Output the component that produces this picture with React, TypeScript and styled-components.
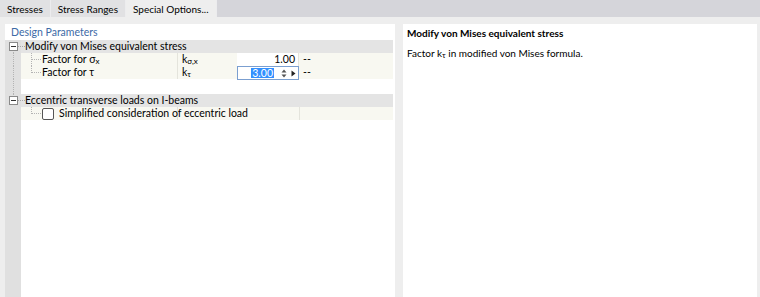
import styled, { createGlobalStyle } from 'styled-components';

const GlobalStyle = createGlobalStyle`
    html, body {
        margin: 0;
        padding: 0;
        background: #eeeeee;
    }
    body {
        font-family: Lato, 'Noto Sans', sans-serif;
        font-size: 10.5px;
        color: #000;
    }
`;

const tabs = ['Stresses', 'Stress Ranges', 'Special Options...'];

const Sub = ({ children }: { children: string }) => <SubText>{children}</SubText>;

export default function App() {
    return (
        <Frame>
            <GlobalStyle />
            <TabBar>
                {tabs.map((t, i) => (
                    <Tab key={t} $active={i === tabs.length - 1}>
                        {t}
                    </Tab>
                ))}
            </TabBar>
            <Content>
                <LeftPanel>
                    <PanelHeader>Design Parameters</PanelHeader>
                    <Tree>
                        <GroupRow>
                            <Gutter>
                                <MinusBox />
                                <RootLine $down />
                            </Gutter>
                            <GroupText>Modify von Mises equivalent stress</GroupText>
                        </GroupRow>
                        <ItemRow>
                            <Gutter>
                                <RootLine $up $down />
                            </Gutter>
                            <NameCell>
                                <Connector />
                                <ItemLabel>
                                    Factor for σ<Sub>x</Sub>
                                </ItemLabel>
                            </NameCell>
                            <SymbolCell>
                                k<Sub>σ,x</Sub>
                            </SymbolCell>
                            <ValueCell>1.00</ValueCell>
                            <UnitCell>--</UnitCell>
                        </ItemRow>
                        <ItemRow>
                            <Gutter>
                                <RootLine $up $down />
                            </Gutter>
                            <NameCell>
                                <Connector $last />
                                <ItemLabel>Factor for τ</ItemLabel>
                            </NameCell>
                            <SymbolCell>
                                k<Sub>τ</Sub>
                            </SymbolCell>
                            <EditCell>
                                <Selected>3.00</Selected>
                                <Spin>
                                    <svg width="6" height="9" viewBox="0 0 6 9">
                                        <path d="M3 0.5 L5.5 3.5 L0.5 3.5 Z M0.5 5.5 L5.5 5.5 L3 8.5 Z" fill="#555" />
                                    </svg>
                                </Spin>
                                <svg width="5" height="7" viewBox="0 0 5 7">
                                    <path d="M0.5 0.5 L4.5 3.5 L0.5 6.5 Z" fill="#222" />
                                </svg>
                            </EditCell>
                            <UnitCell>--</UnitCell>
                        </ItemRow>
                        <SpacerRow>
                            <Gutter>
                                <RootLine $up $down />
                            </Gutter>
                        </SpacerRow>
                        <GroupRow>
                            <Gutter>
                                <RootLine $up />
                                <MinusBox />
                            </Gutter>
                            <GroupText>Eccentric transverse loads on I-beams</GroupText>
                        </GroupRow>
                        <ItemRow>
                            <Gutter />
                            <NameCell>
                                <Connector $last />
                                <CheckBox />
                                <ItemLabel>Simplified consideration of eccentric load</ItemLabel>
                            </NameCell>
                            <EmptyCell />
                        </ItemRow>
                        <FillRow>
                            <Gutter />
                        </FillRow>
                    </Tree>
                </LeftPanel>
                <RightPanel>
                    <InfoTitle>Modify von Mises equivalent stress</InfoTitle>
                    <InfoText>
                        Factor k<Sub>τ</Sub> in modified von Mises formula.
                    </InfoText>
                </RightPanel>
            </Content>
        </Frame>
    );
}

const Frame = styled.div`
    width: 760px;
    height: 297px;
    display: flex;
    flex-direction: column;
    background: #eeeeee;
    overflow: hidden;
`;

const TabBar = styled.div`
    height: 17px;
    display: flex;
    background: #d5d5da;
    flex-shrink: 0;
`;

const Tab = styled.div<{ $active?: boolean }>`
    display: flex;
    align-items: center;
    padding: 0 7px 0 7px;
    background: ${({ $active }) => ($active ? '#eeeeee' : '#e1e1e3')};
    border-right: 1px solid #ececee;
    white-space: nowrap;
    font-size: 10px;
`;

const Content = styled.div`
    flex: 1;
    display: flex;
    gap: 8px;
    padding: 7px 3px 0 5px;
    min-height: 0;
`;

const LeftPanel = styled.div`
    width: 390px;
    background: #fff;
    display: flex;
    flex-direction: column;
`;

const PanelHeader = styled.div`
    height: 16px;
    line-height: 16px;
    padding-left: 6px;
    color: #3d6aa6;
`;

const Tree = styled.div`
    flex: 1;
    display: flex;
    flex-direction: column;
    padding-right: 2px;
`;

const Gutter = styled.div`
    width: 16px;
    flex-shrink: 0;
    align-self: stretch;
    position: relative;
    background: #e0e0e0;
`;

const RootLine = styled.div<{ $up?: boolean; $down?: boolean }>`
    position: absolute;
    left: 8px;
    top: ${({ $up }) => ($up ? '0' : '50%')};
    bottom: ${({ $down }) => ($down ? '0' : '50%')};
    border-left: 1px dotted #b4b4b4;
`;

const MinusBox = styled.div`
    position: absolute;
    left: 4px;
    top: 2px;
    width: 7px;
    height: 7px;
    border: 1px solid #8a8a8a;
    background: #fff;
    z-index: 1;
    &::after {
        content: '';
        position: absolute;
        left: 1px;
        right: 1px;
        top: 3px;
        height: 1px;
        background: #333;
    }
    &::before {
        content: '';
        position: absolute;
        left: 8px;
        top: 3px;
        width: 7px;
        border-top: 1px dotted #a8a8a8;
    }
`;

const GroupRow = styled.div`
    height: 13px;
    display: flex;
    background: #e4e4e4;
    align-items: center;
`;

const GroupText = styled.div`
    padding-left: 4px;
    line-height: 13px;
`;

const ItemRow = styled.div`
    height: 13px;
    display: flex;
    background: #f8f8f1;
`;

const NameCell = styled.div`
    width: 157px;
    flex-shrink: 0;
    position: relative;
    display: flex;
    align-items: center;
    padding-left: 21px;
    box-sizing: border-box;
    border-right: 1px solid #e4e4dc;
`;

const Connector = styled.div<{ $last?: boolean }>`
    position: absolute;
    left: 10px;
    top: 0;
    height: ${({ $last }) => ($last ? '7px' : '13px')};
    width: 9px;
    border-left: 1px dotted #b4b4b4;
    &::after {
        content: '';
        position: absolute;
        left: 0;
        top: 6px;
        width: 9px;
        border-top: 1px dotted #b4b4b4;
    }
`;

const ItemLabel = styled.span`
    line-height: 13px;
    white-space: nowrap;
`;

const SubText = styled.sub`
    font-size: 8px;
    vertical-align: -1px;
    line-height: 0;
`;

const SymbolCell = styled.div`
    width: 59px;
    flex-shrink: 0;
    padding-left: 4px;
    box-sizing: border-box;
    line-height: 13px;
`;

const ValueCell = styled.div`
    width: 62px;
    flex-shrink: 0;
    background: #fff;
    text-align: right;
    padding-right: 3px;
    box-sizing: border-box;
    line-height: 13px;
    border-right: 1px solid #e4e4dc;
`;

const EditCell = styled.div`
    width: 62px;
    height: 14px;
    flex-shrink: 0;
    background: #fff;
    border: 1px solid #7b9fd0;
    box-sizing: border-box;
    display: flex;
    align-items: center;
    justify-content: flex-end;
    padding-right: 2px;
    gap: 4px;
`;

const Selected = styled.span`
    background: #3390ff;
    color: #fff;
    line-height: 10px;
    padding: 0 1px;
    margin-right: 3px;
`;

const Spin = styled.span`
    display: flex;
`;

const UnitCell = styled.div`
    flex: 1;
    padding-left: 4px;
    line-height: 13px;
`;

const EmptyCell = styled.div`
    width: 121px;
    flex-shrink: 0;
    border-right: 1px solid #e4e4dc;
`;

const CheckBox = styled.div`
    width: 10px;
    height: 10px;
    border: 1px solid #555;
    border-radius: 2px;
    background: #fff;
    margin-right: 5px;
    flex-shrink: 0;
`;

const SpacerRow = styled.div`
    height: 15px;
    display: flex;
`;

const FillRow = styled.div`
    flex: 1;
    display: flex;
`;

const RightPanel = styled.div`
    flex: 1;
    background: #fff;
    padding: 3px 4px;
    font-size: 10px;
`;

const InfoTitle = styled.div`
    font-weight: 700;
    line-height: 13px;
`;

const InfoText = styled.div`
    margin-top: 7px;
    line-height: 13px;
`;
